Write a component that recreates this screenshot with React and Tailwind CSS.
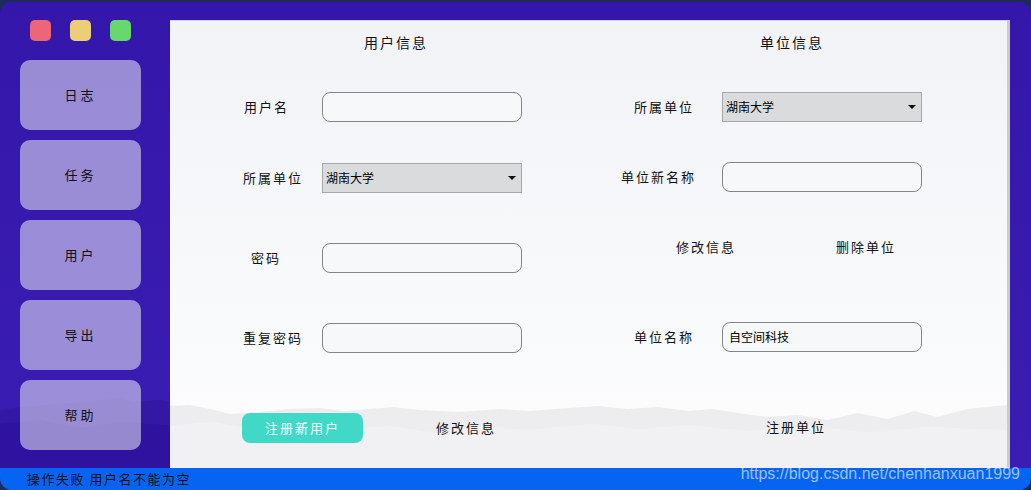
import React from "react";

const kai = { fontFamily: '"Noto Sans CJK SC", "Noto Sans", sans-serif' };

const sideItems = ["日志", "任务", "用户", "导出", "帮助"];

function Field({ value = "" }) {
    return (
        <div className="w-[200px] h-[30px] rounded-[8px] border border-[#858585] bg-[#f7f8fa] flex items-center px-[6px] text-[12px] text-black">
            {value}
        </div>
    );
}

function Select({ value }) {
    return (
        <div className="w-[200px] h-[30px] border border-[#a5a7aa] bg-[#d9dbdd] flex items-center justify-between pl-[3px] pr-[5px] text-[12px] text-black">
            <span>{value}</span>
            <span className="w-0 h-0 border-l-[4px] border-r-[4px] border-t-[4px] border-l-transparent border-r-transparent border-t-black" />
        </div>
    );
}

function Label({ children, className = "" }) {
    return (
        <span className={`text-[13px] tracking-[2px] text-[#111] ${className}`} style={kai}>
            {children}
        </span>
    );
}

function Mountains() {
    return (
        <svg
            className="absolute left-0 bottom-0 w-full h-[72px]"
            viewBox="0 0 840 72"
            preserveAspectRatio="none"
        >
            <path
                d="M0 10 L20 9 L45 14 L60 18 L90 16 L120 13 L150 12 L175 15 L200 13 L225 11 L250 14 L290 16 L330 13 L360 15 L400 12 L430 10 L460 13 L490 11 L520 15 L545 13 L570 17 L600 21 L630 19 L660 24 L690 17 L720 23 L747 15 L770 21 L800 13 L820 11 L840 9 L840 72 L0 72 Z"
                fill="#ededf0"
            />
            <path
                d="M0 30 L40 26 L80 32 L130 28 L170 34 L220 30 L260 36 L310 30 L360 34 L420 28 L470 33 L520 29 L580 35 L640 30 L700 36 L760 31 L840 34 L840 72 L0 72 Z"
                fill="#f1f1f3"
            />
        </svg>
    );
}

export default function App() {
    return (
        <div className="w-[1031px] h-[490px] bg-[#1d2b5b] overflow-hidden" style={kai}>
            <div className="relative mt-[2px] h-[488px] rounded-[12px] overflow-hidden bg-gradient-to-b from-[#3416aa] to-[#3a1db2] flex flex-col">
                {/* purple hills behind the sidebar */}
                <svg className="absolute left-0 top-[392px] w-[180px] h-[80px]" viewBox="0 0 180 80" preserveAspectRatio="none">
                    <path d="M0 16 L30 12 L60 10 L90 8 L115 4 L135 8 L160 6 L180 10 L180 80 L0 80 Z" fill="#3318a6" />
                    <path d="M0 30 L40 26 L80 34 L120 28 L180 32 L180 80 L0 80 Z" fill="#2f13a0" />
                </svg>

                <div className="relative flex flex-1 min-h-0">
                    <aside className="w-[170px] shrink-0 pl-[20px] pt-[18px] flex flex-col">
                        <div className="flex gap-[19px] ml-[10px]">
                            <span className="w-[21px] h-[21px] rounded-[5px] bg-[#ec6677]" />
                            <span className="w-[21px] h-[21px] rounded-[5px] bg-[#ecce78]" />
                            <span className="w-[21px] h-[21px] rounded-[5px] bg-[#67d86b]" />
                        </div>
                        <div className="mt-[19px] flex flex-col gap-[10px]">
                            {sideItems.map((item) => (
                                <div
                                    key={item}
                                    className="w-[121px] h-[70px] rounded-[10px] bg-white/50 flex items-center justify-center"
                                >
                                    <Label className="tracking-[3px]">{item}</Label>
                                </div>
                            ))}
                        </div>
                    </aside>

                    <main className="relative mt-[18px] w-[840px] border-t border-[#d2d3da] border-r-[3px] border-r-[#cbcbcf] bg-gradient-to-b from-[#f2f3f7] via-[#f6f8fa] to-[#fdfdfd] overflow-hidden">
                        <Mountains />
                        <div className="relative flex">
                            {/* user info */}
                            <section className="w-[420px] flex flex-col">
                                <div className="h-[42px] flex items-center pl-[194px] text-[14px] tracking-[2px] text-[#111]">
                                    用户信息
                                </div>
                                <div className="mt-[28px] flex items-center h-[31px]">
                                    <Label className="w-[152px] pl-[74px]">用户名</Label>
                                    <Field />
                                </div>
                                <div className="mt-[41px] flex items-center h-[30px]">
                                    <Label className="w-[152px] pl-[73px]">所属单位</Label>
                                    <Select value="湖南大学" />
                                </div>
                                <div className="mt-[50px] flex items-center h-[30px]">
                                    <Label className="w-[152px] pl-[81px]">密码</Label>
                                    <Field />
                                </div>
                                <div className="mt-[50px] flex items-center h-[30px]">
                                    <Label className="w-[152px] pl-[73px]">重复密码</Label>
                                    <Field />
                                </div>
                                <div className="mt-[60px] flex items-center h-[30px]">
                                    <div className="ml-[72px] w-[121px] h-[30px] rounded-[8px] bg-[#40d9c8] flex items-center justify-center text-[13px] tracking-[2px] text-white">
                                        注册新用户
                                    </div>
                                    <Label className="ml-[73px]">修改信息</Label>
                                </div>
                            </section>

                            {/* unit info */}
                            <section className="flex-1 flex flex-col">
                                <div className="h-[42px] flex items-center pl-[170px] text-[14px] tracking-[2px] text-[#111]">
                                    单位信息
                                </div>
                                <div className="mt-[29px] flex items-center h-[30px]">
                                    <Label className="w-[132px] pl-[44px]">所属单位</Label>
                                    <Select value="湖南大学" />
                                </div>
                                <div className="mt-[40px] flex items-center h-[30px]">
                                    <Label className="w-[132px] pl-[31px]">单位新名称</Label>
                                    <Field />
                                </div>
                                <div className="mt-[40px] flex items-center h-[30px]">
                                    <Label className="pl-[86px]">修改信息</Label>
                                    <Label className="ml-[100px]">删除单位</Label>
                                </div>
                                <div className="mt-[60px] flex items-center h-[30px]">
                                    <Label className="w-[132px] pl-[44px]">单位名称</Label>
                                    <Field value="自空间科技" />
                                </div>
                                <div className="mt-[60px] flex items-center h-[30px]">
                                    <Label className="pl-[176px]">注册单位</Label>
                                </div>
                            </section>
                        </div>
                    </main>
                </div>

                <footer className="relative h-[22px] shrink-0 bg-[#0664f3] flex items-center pl-[27px]">
                    <span className="text-[13px] tracking-[1.5px] text-[#111]">操作失败 用户名不能为空</span>
                </footer>

                <span
                    className="absolute right-[11px] bottom-[8px] text-[16px] leading-none text-white/60"
                    style={{ fontFamily: '"Liberation Sans", Arial, sans-serif' }}
                >
                    https://blog.csdn.net/chenhanxuan1999
                </span>
            </div>
        </div>
    );
}
